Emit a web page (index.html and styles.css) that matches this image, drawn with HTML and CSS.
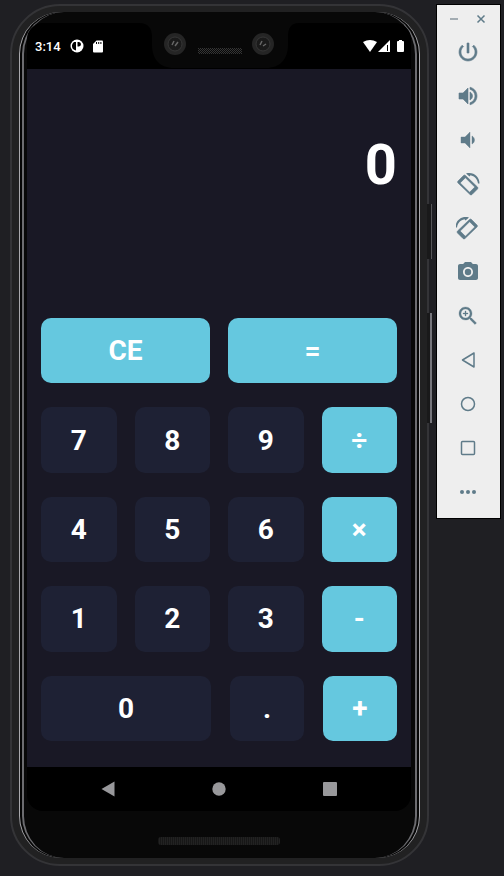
FILE: index.html
```html
<!DOCTYPE html>
<html lang="en">
<head>
<meta charset="utf-8">
<meta name="viewport" content="width=device-width, initial-scale=1">
<title>Calculator</title>
<link rel="stylesheet" href="styles.css">
</head>
<body>
<main class="phone">
  <span class="side-key side-key-power"></span>
  <span class="side-key side-key-volume"></span>
  <div class="rim">
    <div class="bezel">
      <div class="screen">
        <header class="status">
          <div class="status-group">
            <time>3:14</time>
            <svg width="14" height="14" viewBox="0 0 14 14"><circle cx="7" cy="7" r="6.5" fill="#fff"/><path d="M4 3h2v8.500C3 11 1.800 9 2 6.500 2.200 5 3 4 4 3zM7.500 3H9q2 .3 2 2.300T9 7.500H7.500z" fill="#000"/></svg>
            <svg width="10" height="13" viewBox="0 0 10 13"><path d="M3.500.5H9q1 0 1 1v10q0 1-1 1H1q-1 0-1-1V4z" fill="#fff"/><path d="M3.500 2v2M5.700 2v2M7.900 2v2" stroke="#000"/></svg>
          </div>
          <svg class="notch" width="160" height="46" viewBox="0 0 160 46">
            <path d="M0 0C9 0 13 5 13 14V22C13 36 21 45 35 45H127C141 45 149 36 149 22V14C149 5 152 0 160 0z" fill="#080808"/>
            <g fill="#252525"><circle cx="36" cy="21" r="11"/><circle cx="124" cy="21" r="11"/></g>
            <g fill="#1a1a1a" stroke="#363636"><circle cx="36" cy="21" r="7"/><circle cx="124" cy="21" r="7"/></g>
            <path d="M33 22l2-4M36 23l3-4M121 22l2-4M124 23l3-2" stroke="#666" stroke-width="1.500" fill="none"/>
            <path d="M59 25.500h43M60 26.500h43M59 27.500h43M60 28.500h43M59 29.500h43M60 30.500h43" stroke="#353535" stroke-dasharray="1 1"/>
          </svg>
          <svg width="42" height="14" viewBox="0 0 42 14" fill="#fff"><path d="M0 3Q7-1 14 3L7 13z"/><path d="M27 1v12H15z"/><path d="M24.500 6v6" stroke="#000"/><path d="M35 2h1V1h3v1h1q1 0 1 1v9q0 1-1 1h-5q-1 0-1-1V3q0-1 1-1z"/></svg>
        </header>
        <section class="app">
          <output class="display">0</output>
          <div class="keypad">
            <div class="row"><button class="key accent">CE</button><button class="key accent">=</button></div>
            <div class="row"><button class="key">7</button><button class="key">8</button><button class="key">9</button><button class="key accent">÷</button></div>
            <div class="row"><button class="key">4</button><button class="key">5</button><button class="key">6</button><button class="key accent">×</button></div>
            <div class="row"><button class="key">1</button><button class="key">2</button><button class="key">3</button><button class="key accent">-</button></div>
            <div class="row row-zero"><button class="key">0</button><button class="key">.</button><button class="key accent">+</button></div>
          </div>
        </section>
        <nav class="android-nav">
          <button aria-label="Back"><svg width="16" height="16" viewBox="0 0 16 16"><path d="M14.500.5v15L1.500 8z"/></svg></button>
          <button aria-label="Home"><svg width="16" height="16" viewBox="0 0 16 16"><circle cx="8" cy="8" r="6.700"/></svg></button>
          <button aria-label="Recent apps"><svg width="16" height="16" viewBox="0 0 16 16"><rect x="1" y="1" width="14" height="14" rx="1"/></svg></button>
        </nav>
      </div>
      <div class="speaker"></div>
    </div>
  </div>
</main>
<aside class="toolbar">
  <div class="window-controls">
    <button aria-label="Minimize"><svg width="10" height="10" viewBox="0 0 10 10"><path d="M1 5h8" stroke="#a3acb2" stroke-width="2"/></svg></button>
    <button aria-label="Close"><svg width="10" height="10" viewBox="0 0 10 10"><path d="M1.500 1.500l7 7M8.500 1.500l-7 7" stroke="#5f7b89" stroke-width="1.500"/></svg></button>
  </div>
  <button class="tool" aria-label="Power"><svg viewBox="0 0 24 24"><path stroke="currentColor" stroke-width=".6" d="M13 3h-2v10h2V3zm4.830 2.170l-1.420 1.420C17.990 7.860 19 9.810 19 12c0 3.870-3.130 7-7 7s-7-3.130-7-7c0-2.190 1.010-4.140 2.580-5.420L6.170 5.170C4.230 6.820 3 9.260 3 12c0 4.970 4.030 9 9 9s9-4.030 9-9c0-2.740-1.230-5.180-3.170-6.830z"/></svg></button>
  <button class="tool" aria-label="Volume up"><svg viewBox="0 0 24 24"><path stroke="currentColor" stroke-width=".6" d="M3 9v6h4l5 5V4L7 9H3zm13.500 3c0-1.770-1.020-3.290-2.500-4.030v8.050c1.480-.73 2.500-2.250 2.500-4.020zM14 3.230v2.060c2.890.86 5 3.540 5 6.710s-2.110 5.850-5 6.710v2.060c4.010-.91 7-4.490 7-8.770s-2.990-7.860-7-8.770z"/></svg></button>
  <button class="tool" aria-label="Volume down"><svg viewBox="0 0 24 24"><path stroke="currentColor" stroke-width=".4" d="M18.500 12c0-1.770-1.020-3.290-2.500-4.030v8.050c1.480-.73 2.500-2.250 2.500-4.020zM5 9v6h4l5 5V4L9 9H5z"/></svg></button>
  <button class="tool" aria-label="Rotate left"><svg viewBox="0 0 24 24"><g id="rotate" stroke="currentColor" stroke-width=".6"><path fill-rule="evenodd" d="M7.500 3.500Q8.500 2.500 9.500 3.500L21.500 15Q22.500 16 21.500 17L16 22.500Q15 23.500 14 22.500L2 11Q1 10 2 9zM9.400 5.700L4.200 10.900 13.600 20.300 18.800 15.100z"/><path stroke="none" d="M10 1.500C17-.5 23.500 4 23.500 11.500H22C21.500 7 18.500 4 14.500 3.200L13.500 4.500z"/></g></svg></button>
  <button class="tool" aria-label="Rotate right"><svg viewBox="0 0 24 24"><use href="#rotate" transform="matrix(-1 0 0 1 23 0)"/></svg></button>
  <button class="tool" aria-label="Take screenshot"><svg viewBox="0 0 24 24"><circle cx="12" cy="12" r="3.200"/><path d="M9 2L7.170 4H4c-1.100 0-2 .9-2 2v12c0 1.100.9 2 2 2h16c1.100 0 2-.9 2-2V6c0-1.100-.9-2-2-2h-3.170L15 2H9zm3 15c-2.760 0-5-2.240-5-5s2.240-5 5-5 5 2.240 5 5-2.240 5-5 5z"/></svg></button>
  <button class="tool" aria-label="Zoom"><svg viewBox="0 0 24 24"><path stroke="currentColor" stroke-width=".3" d="M15.500 14h-.79l-.28-.27C15.410 12.590 16 11.110 16 9.500 16 5.910 13.090 3 9.500 3S3 5.910 3 9.500 5.910 16 9.500 16c1.610 0 3.090-.59 4.230-1.570l.27.28v.79l5 4.990L20.490 19l-4.990-5zm-6 0C7.010 14 5 11.990 5 9.500S7.010 5 9.500 5 14 7.010 14 9.500 11.990 14 9.500 14zM12 10h-2v2H9v-2H7V9h2V7h1v2h2v1z"/></svg></button>
  <button class="tool" aria-label="Back"><svg viewBox="0 0 24 24"><path fill="none" stroke="currentColor" stroke-width="1.500" stroke-linejoin="round" d="M18 5v14L6.500 12z"/></svg></button>
  <button class="tool" aria-label="Home"><svg viewBox="0 0 24 24"><circle fill="none" stroke="currentColor" stroke-width="1.500" cx="12" cy="12" r="6.500"/></svg></button>
  <button class="tool" aria-label="Overview"><svg viewBox="0 0 24 24"><rect fill="none" stroke="currentColor" stroke-width="1.500" x="5.500" y="5.500" width="13" height="13" rx="1"/></svg></button>
  <button class="tool" aria-label="More"><svg viewBox="0 0 24 24"><circle cx="6" cy="12" r="2"/><circle cx="12" cy="12" r="2"/><circle cx="18" cy="12" r="2"/></svg></button>
</aside>
</body>
</html>
```
FILE: styles.css
```css
* { box-sizing: border-box; }

body {
  margin: 0;
  min-height: 100vh;
  padding: 4px 3px 10px 10px;
  display: grid;
  grid-template-columns: minmax(0, 1fr) 65px;
  gap: 7px;
  align-items: start;
  background: #1f1f23;
  font-family: Roboto, sans-serif;
}

button {
  margin: 0;
  padding: 0;
  border: 0;
  background: none;
  color: inherit;
  font: inherit;
}

svg { display: block; }

.phone {
  position: relative;
  padding: 6px 7px;
  border: 2px solid #343437;
  border-radius: 50px;
  background: #212122;
}

.side-key {
  position: absolute;
  left: 100%;
  width: 5px;
  border-right: 1px solid #555558;
  background: #19191a;
}

.side-key-power { top: 198px; height: 55px; }

.side-key-volume {
  top: 307px;
  height: 110px;
  border-right: 2px solid #77777d;
}

.rim {
  padding: 0 2px;
  border: solid #a9a9ad;
  border-width: 0 1px;
  border-radius: 42px;
  background: #050505;
}

.bezel {
  padding: 11px 4px 0 3px;
  border: solid #6c6c70;
  border-width: 0 2px;
  border-radius: 42px;
  background: #080808;
}

.bezel::after {
  content: "";
  display: block;
  height: 13px;
}

.screen {
  overflow: hidden;
  border-radius: 16px;
  background: #000;
}

.status {
  position: relative;
  display: flex;
  justify-content: space-between;
  align-items: center;
  height: 46px;
  padding: 0 6px 0 8px;
  color: #fff;
  font-size: 13px;
  font-weight: 500;
}

.status-group {
  display: flex;
  align-items: center;
  gap: 9px;
}

.notch {
  position: absolute;
  top: 0;
  left: 50%;
  margin-left: -80px;
}

.app {
  padding: 0 14px 26px;
  background: #191825;
  color: #fff;
}

.display {
  display: flex;
  justify-content: flex-end;
  align-items: center;
  height: 249px;
  padding-bottom: 58px;
  font-size: 56px;
  font-weight: 700;
}

.keypad {
  display: grid;
  grid-template-rows: repeat(5, 1fr);
  gap: 24px;
  height: 423px;
}

.row {
  display: grid;
  grid-auto-flow: column;
  grid-auto-columns: minmax(0, 1fr);
  gap: 18px;
}

.row-zero {
  grid-template-columns: 170fr 74fr 74fr;
  gap: 19px;
}

.key {
  border-radius: 10px;
  background: #1e2134;
  font-size: 28px;
  font-weight: 700;
}

.accent { background: #65c8df; }

.android-nav {
  display: flex;
  justify-content: space-around;
  align-items: center;
  height: 44px;
  padding: 0 25px;
  fill: #98989b;
}

.speaker {
  width: 122px;
  height: 8px;
  margin: 26px auto 0;
  border-radius: 3px;
  background: repeating-linear-gradient(90deg, #171717 0 1px, #222 1px 2px);
}

.toolbar {
  padding: 0 2px 4px 0;
  border: 1px solid #000;
  background: #eee;
  color: #5f7b89;
}

.window-controls {
  display: flex;
  justify-content: center;
  align-items: center;
  gap: 17px;
  height: 25px;
  padding-top: 3px;
}

.tool {
  display: flex;
  justify-content: center;
  align-items: center;
  width: 100%;
  height: 44px;
  fill: currentColor;
}

.tool svg {
  width: 24px;
  height: 24px;
}
```
